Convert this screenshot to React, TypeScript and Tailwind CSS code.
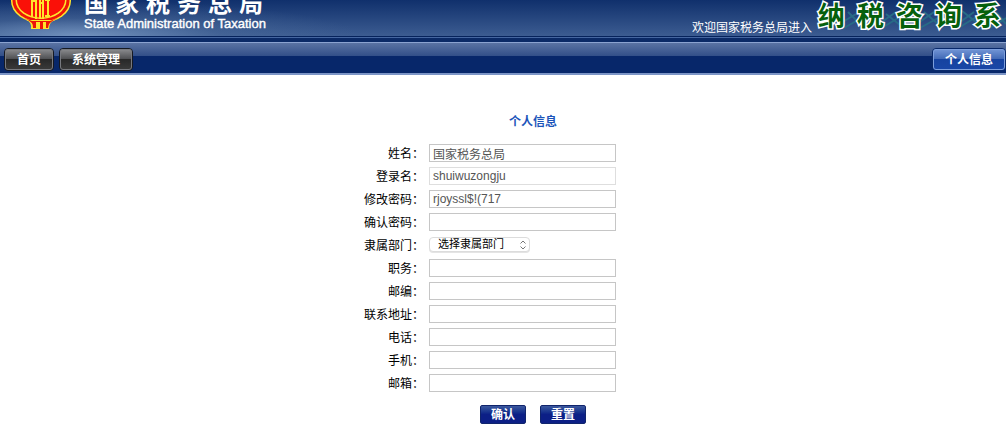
import clsx from "clsx";

type Field = {
  id: string;
  label: string;
  value?: string;
  disabled?: boolean;
  kind?: "select";
};

const FIELDS: Field[] = [
  { id: "name", label: "姓名", value: "国家税务总局" },
  { id: "login", label: "登录名", value: "shuiwuzongju", disabled: true },
  { id: "password", label: "修改密码", value: "rjoyssl$!(717" },
  { id: "confirm", label: "确认密码" },
  { id: "department", label: "隶属部门", kind: "select" },
  { id: "duty", label: "职务" },
  { id: "postcode", label: "邮编" },
  { id: "address", label: "联系地址" },
  { id: "phone", label: "电话" },
  { id: "mobile", label: "手机" },
  { id: "email", label: "邮箱" },
];

export default function App() {
  return (
    <div className="min-h-screen bg-white font-['Liberation_Sans','Noto_Sans_CJK_SC',sans-serif] text-xs text-black">
      <Header />
      <NavBar />
      <ProfileForm />
    </div>
  );
}

function Header() {
  return (
    <header className="bg-[#0b2a66]">
      {/* the banner is taller than its strip, so everything hangs from the bottom edge */}
      <div className="flex h-9 items-end justify-between overflow-hidden bg-linear-to-b from-[#10306c] to-[#3c5c91]">
        <div className="flex h-9 items-end bg-[radial-gradient(ellipse_at_80px_36px,#7191bd_0%,#51719f66_35%,transparent_70%)] pr-24 pl-2">
          <Emblem />
          <div className="pb-1 pl-2.5 text-white">
            <p className="flex gap-[7px] font-['Liberation_Serif','Noto_Sans_CJK_SC',sans-serif] text-2xl leading-6 font-bold">
              {Array.from("国家税务总局").map((c) => (
                <span key={c}>{c}</span>
              ))}
            </p>
            <p className="text-[13px] leading-4 [-webkit-text-stroke:0.4px_white]">
              State Administration of Taxation
            </p>
          </div>
        </div>
        <div className="flex shrink-0 items-end gap-1">
          <p className="leading-4 text-white">欢迎国家税务总局进入</p>
          <div className="relative h-9 w-[190px]">
            <Waves />
            <p className="relative flex gap-3 pt-px pl-0.5 text-[27px] leading-8 font-bold text-[#06600c] [-webkit-text-stroke:3px_white] [paint-order:stroke_fill]">
              {Array.from("纳税咨询系").map((c) => (
                <span key={c}>{c}</span>
              ))}
            </p>
          </div>
        </div>
      </div>
      <div className="h-[7px] border-t border-b border-t-[#06235c] border-b-[#8ba3d0] bg-linear-to-b from-[#4566a0] from-15% to-[#0b2a66] to-30%" />
    </header>
  );
}

function Emblem() {
  return (
    <svg viewBox="0 -26 66 62" className="h-[62px] w-[66px]" aria-hidden="true">
      <g transform="translate(0 7)">
        <ellipse cx="33" cy="-6" rx="30" ry="22" fill="#ffe52c" />
        <ellipse cx="33" cy="-6" rx="28.5" ry="20.5" fill="#ee1408" />
        <ellipse cx="33" cy="-7" rx="25.5" ry="19" fill="#ffe52c" />
        <ellipse cx="33" cy="-7" rx="24" ry="17.5" fill="#fa1008" />
        <path d="M18 13 Q24 15 23 22 H41 Q41 15 47 13 Z" fill="#ffe52c" />
        <path
          d="M16 11 Q26 15 25 21 H28 V15 H32 V22 H35 V15 H38 V21 H40 Q40 15 50 11 L42 14 H24 Z"
          fill="#ee1408"
        />
        <path
          d="M24 -9 V10 M28 -12 V12 M32 -12 V12 M35 -9 V12 M37 -7 H42 M40 -9 V9 M37 9 H42 M24 -6 H28 M32 -4 H35"
          fill="none"
          stroke="#ffe52c"
          strokeWidth="2"
        />
      </g>
    </svg>
  );
}

function Waves() {
  return (
    <svg
      viewBox="0 0 190 36"
      className="absolute inset-0 h-9 w-full"
      fill="none"
      stroke="#276b86"
      strokeWidth="2"
      aria-hidden="true"
    >
      <path d="M20 26 L40 14 M28 28 L42 20 M32 12 L44 24 M60 26 L80 12 M66 28 L82 18 M70 14 L84 25" />
      <path d="M98 26 L118 12 M104 28 L122 18 M108 12 L122 24 M136 28 L158 12 M144 27 L162 16 M146 11 L160 22" />
      <path d="M174 28 L190 18 M180 12 L190 24" />
    </svg>
  );
}

function NavBar() {
  return (
    <nav className="flex h-8 items-center justify-between border-b-2 border-[#7c95c6] bg-[linear-gradient(#5a73a3_0,#324f88_13px,#07276a_13px,#07276a_100%)] pt-1 pb-0.5 pl-1">
      <div className="flex gap-[5px]">
        <NavButton>首页</NavButton>
        <NavButton>系统管理</NavButton>
      </div>
      <NavButton active>个人信息</NavButton>
    </nav>
  );
}

function NavButton({ children, active }: { children: string; active?: boolean }) {
  return (
    <button
      type="button"
      className={clsx(
        "h-[23px] rounded border px-3 pt-px leading-5 font-bold text-white outline-1 -outline-offset-2",
        active
          ? "border-[#09296b] bg-[linear-gradient(#7396d6_0,#3f67b4_50%,#1643a0_50%,#1947a7_100%)] outline-[#7c9edc]"
          : "border-[#151922] bg-[linear-gradient(#8c8d90_0,#4b4c4f_50%,#282828_50%,#3b3b3b_100%)] outline-[#77797f]",
      )}
    >
      {children}
    </button>
  );
}

function ProfileForm() {
  return (
    <form className="mx-auto w-80 pt-[39px]" onSubmit={(e) => e.preventDefault()}>
      <h1 className="pl-[60px] text-center leading-4 font-bold text-[#1c55ba]">个人信息</h1>
      <div className="pt-[11px]">
        {FIELDS.map((field) => (
          <div key={field.id} className="flex h-[23px] items-center gap-[5px]">
            <label htmlFor={field.id} className="w-[81px] pt-0.5 text-right leading-[18px]">
              {field.label}：
            </label>
            {field.kind === "select" ? (
              <DepartmentSelect id={field.id} />
            ) : (
              <input
                id={field.id}
                type="text"
                defaultValue={field.value}
                disabled={field.disabled}
                className="h-[18px] w-[187px] border border-[#c6c6c6] bg-white px-[3px] pt-[3px] pb-0.5 text-[#555] disabled:border-[#dedede]"
              />
            )}
          </div>
        ))}
      </div>
      <div className="flex justify-center gap-3.5 pt-[11px] pl-[60px]">
        <FormButton type="submit">确认</FormButton>
        <FormButton type="reset">重置</FormButton>
      </div>
    </form>
  );
}

function DepartmentSelect({ id }: { id: string }) {
  return (
    <div className="relative">
      <select
        id={id}
        className="block h-[15px] w-[101px] appearance-none rounded border border-[#dcdcdc] bg-white pl-2 text-[11px] leading-[13px] shadow-[0_1px_0_#e4e4e4]"
      >
        <option>选择隶属部门</option>
      </select>
      <svg
        viewBox="0 0 6 10"
        className="pointer-events-none absolute top-[3px] right-1 h-2.5 w-1.5"
        fill="none"
        stroke="#777"
        aria-hidden="true"
      >
        <path d="M0.5 3.5 L3 1 L5.5 3.5 M0.5 6.5 L3 9 L5.5 6.5" />
      </svg>
    </div>
  );
}

function FormButton({ type, children }: { type: "submit" | "reset"; children: string }) {
  return (
    <button
      type={type}
      className="h-[19px] w-[46px] rounded-xs border border-[#10246c] bg-linear-to-b from-[#3c589e] to-[#0c1f86] to-50% pt-0.5 leading-[15px] font-bold text-white"
    >
      {children}
    </button>
  );
}
